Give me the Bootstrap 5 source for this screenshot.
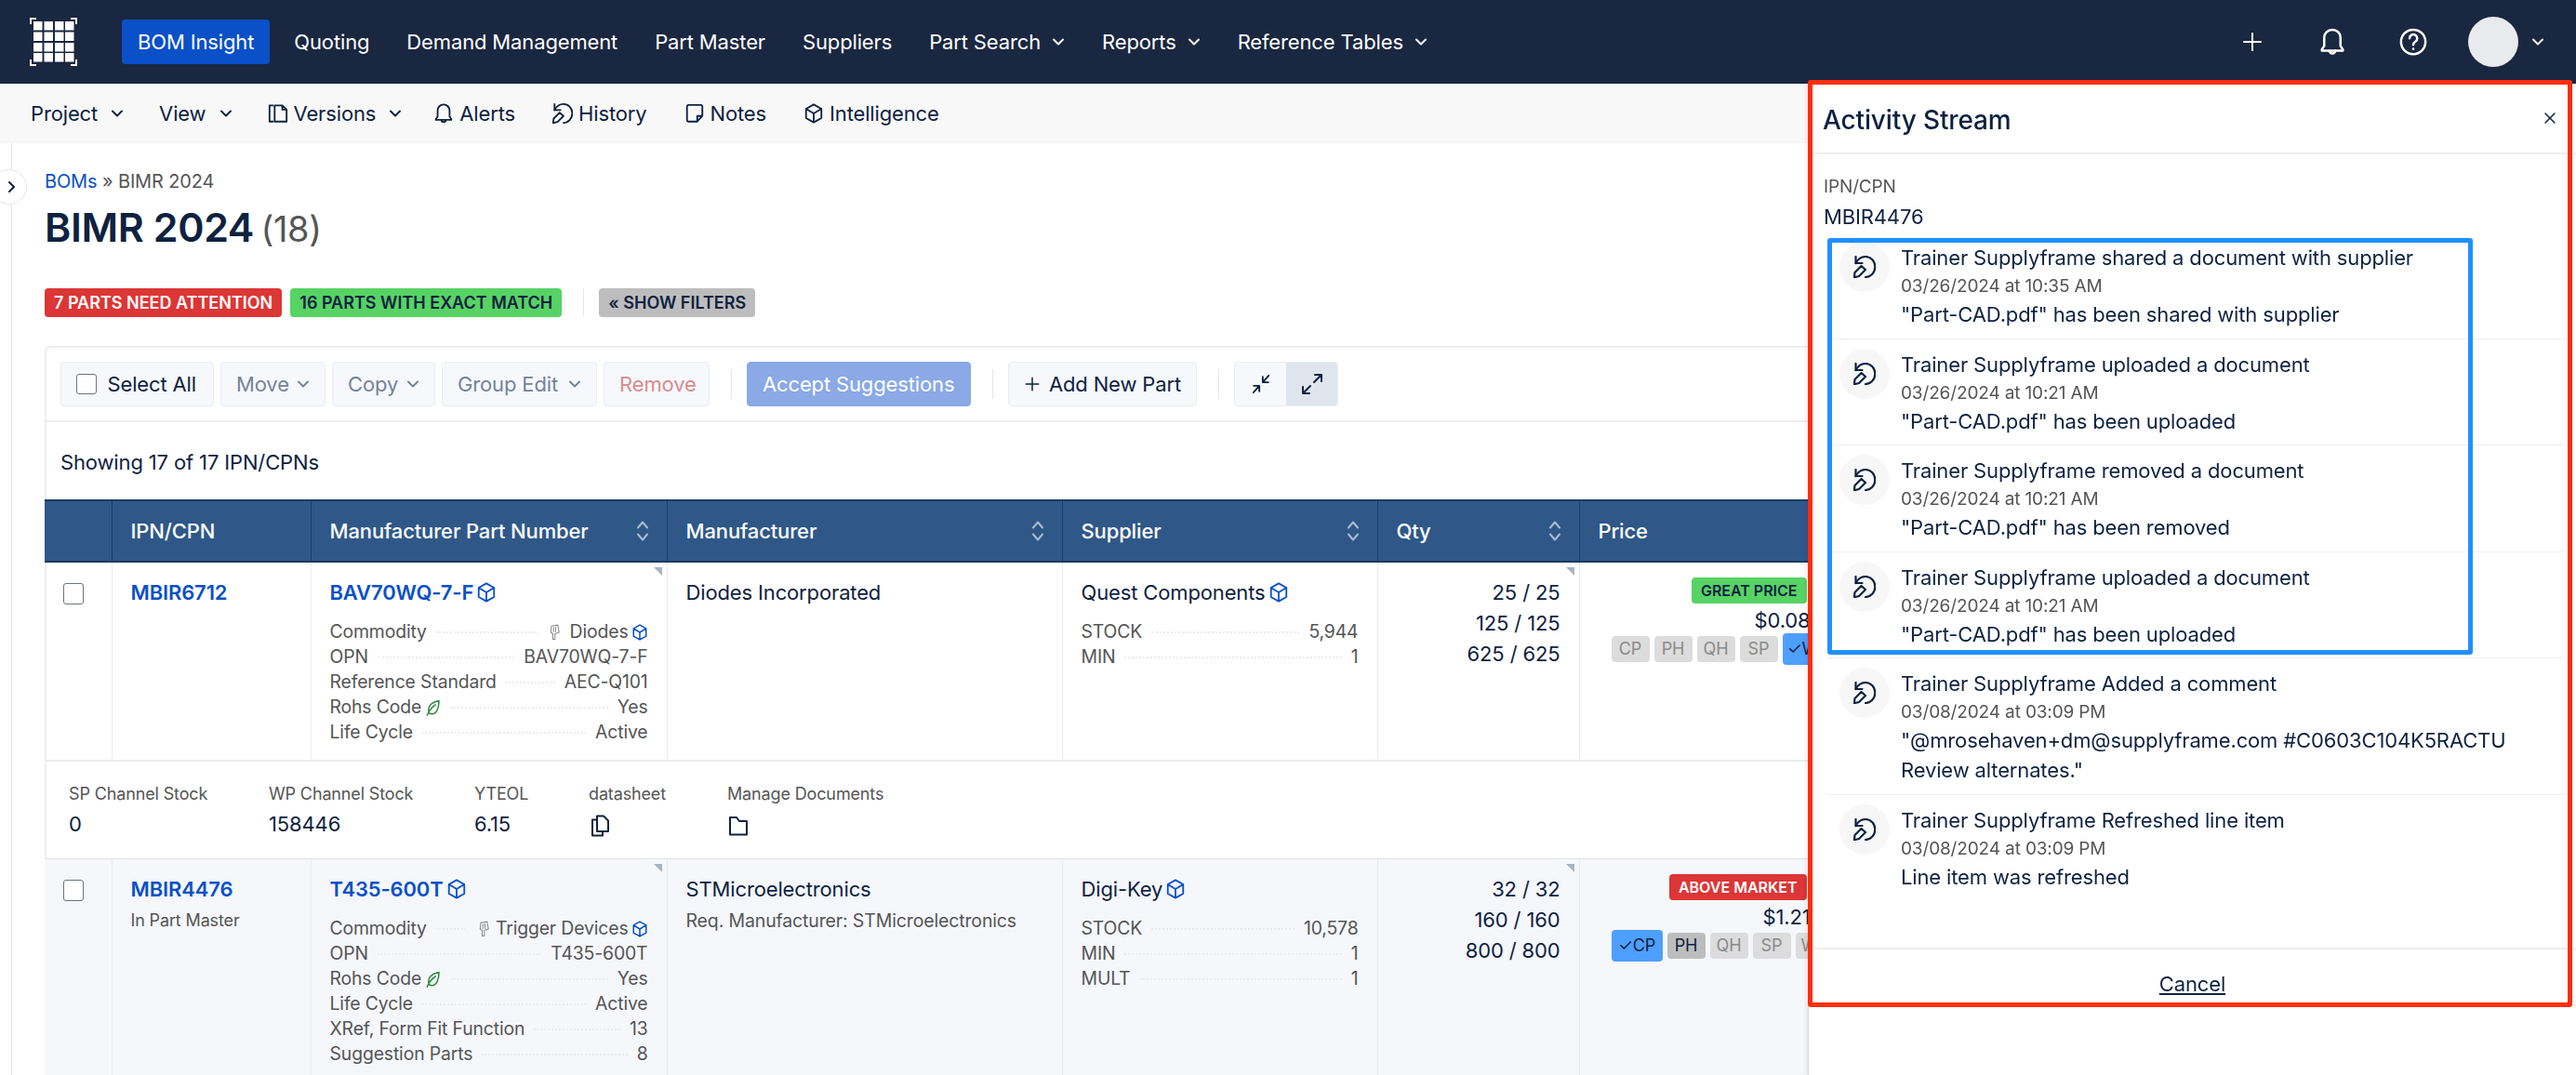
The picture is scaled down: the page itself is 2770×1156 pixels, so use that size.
<!DOCTYPE html>
<html lang="en">
<head>
    <meta charset="UTF-8">
    <meta name="viewport" content="width=device-width, initial-scale=1.0">
    <title>BIMR 2024 - BOM Insight</title>
    <link href="https://cdn.jsdelivr.net/npm/bootstrap@5.3.0/dist/css/bootstrap.min.css" rel="stylesheet">
    <style>
        html, body { height: 100%; overflow: hidden; }
        body { font-family: Inter, "Liberation Sans", sans-serif; font-size: 22px; letter-spacing: -.14px; color: #0e2240; background: #fff; }
        svg.ico { fill: none; stroke: currentColor; stroke-width: 2; stroke-linecap: round; stroke-linejoin: round; flex: none; }
        .i14 { width: 14px; height: 14px; } .i18 { width: 18px; height: 18px; } .i22 { width: 22px; height: 22px; }
        .i24 { width: 24px; height: 24px; } .i30 { width: 30px; height: 30px; }

        .topbar { height: 90px; background: #1a2740; padding: 0 32px; }
        .topbar .brand-logo { width: 51px; height: 52px; margin-right: 48px; }
        .topbar .navbar-nav .nav-link { color: #fff; font-size: 22px; line-height: 48px; padding: 0 20px; display: flex; align-items: center; }
        .topbar .navbar-nav .nav-link.active { background: #0a50c8; color: #fff; border-radius: 4px; padding: 0 17px; margin-right: 6px; }
        .topbar .nav-link .i14 { margin-left: 12px; }
        .top-actions { color: #fff; margin-right: 2px; }
        .act-plus { margin-right: 59px; } .act-bell { margin-right: 57px; } .act-help { margin-right: 44px; } .act-chev { margin-left: 14px; }
        .avatar-dot { width: 54px; height: 54px; border-radius: 50%; background: #e8eaee; }

        .subbar { height: 64px; background: #f8f8f8; padding: 0 33px; gap: 38px; }
        .subbar a { color: #0e2240; text-decoration: none; display: flex; align-items: center; gap: 6px; }
        .subbar a .i14 { margin-left: 8px; }
        .subbar a.sub-alerts { margin-left: -4px; }
        .subbar a.sub-plain { margin-left: 2px; }

        .rail { position: absolute; left: 12px; top: 154px; bottom: 0; width: 1px; background: #e6e6e6; }
        .rail-toggle { position: absolute; left: -9px; top: 182px; width: 38px; height: 38px; border-radius: 50%; border: 1px solid #e6e6e6; background: #fff; display: flex; align-items: center; justify-content: center; padding-left: 3px; }

        .page-main { padding: 28px 20px 0 48px; }
        .crumbs { font-size: 20px; line-height: 26px; color: #555; }
        .crumbs a { color: #0a50c8; text-decoration: none; }
        .page-title { font-size: 43px; font-weight: 600; line-height: 56px; margin: 8px 0 0; color: #0e2240; letter-spacing: -.4px; }
        .page-title span { font-size: 38px; font-weight: 400; color: #555; margin-left: -3px; }
        .tag-row { margin-top: 36px; height: 31px; }
        .tag-pill { font-size: 18px; font-weight: 600; line-height: 31px; padding: 0 10px; border-radius: 4px; text-transform: uppercase; letter-spacing: 0; }
        .tag-red { background: #dc3636; color: #fff; }
        .tag-green { background: #57d364; color: #0e2240; margin-left: 9px; }
        .tag-grey { background: #bdbdbd; color: #0e2240; }
        .vline { width: 1px; background: #e6e6e6; align-self: stretch; }
        .tag-row .vline { margin: 0 16px 0 23px; }

        .bom-card { margin-top: 31px; border: 2px solid #eeeeee; border-right: 0; border-bottom: 0; border-radius: 6px 0 0 0; }
        .bom-tools { height: 80px; padding: 15px 15px; gap: 7px; border-bottom: 2px solid #eeeeee; }
        .tool-btn { height: 48px; flex: none; font-size: 22px; line-height: 46px; padding: 0 16px; background: #f6f8fb; border: 1px solid #e9edf2; border-radius: 4px; color: #0e2240; display: flex; align-items: center; justify-content: space-between; white-space: nowrap; }
        .tb-select { width: 165px; padding-right: 18px; } .tb-move { width: 113px; } .tb-copy { width: 111px; } .tb-group { width: 167px; }
        .tb-remove { width: 114px; } .tb-accept { width: 241px; } .tb-add { width: 203px; }
        .tool-btn.off { color: #75839a; }
        .tool-btn.danger { color: #d98c8c; }
        .tool-btn.accept { background: #8aa9e6; border-color: #8aa9e6; color: #fff; }
        .tool-check { width: 22px; height: 22px; border: 1px solid #6c757d; border-radius: 3px; background: #fff; }
        .tool-sep { margin: 8px 9px 8px 16px; }
        .size-toggle { width: 112px; height: 48px; border: 1px solid #e9edf2; border-radius: 4px; overflow: hidden; }
        .size-toggle div { flex: 1; display: flex; align-items: center; justify-content: center; background: #f6f8fb; }
        .size-toggle div + div { background: #dfe5ed; }
        .showing { height: 83px; padding: 3px 0 0 15px; display: flex; align-items: center; }

        .bom-table { table-layout: fixed; width: calc(100% + 2px); margin: 0 0 0 -2px; color: #0e2240; }
        .bom-table > :not(caption) > * > * { padding: 16px 20px; border-bottom: 0; background: transparent; color: inherit; box-shadow: none; }
        .bom-table th { background: #2f5888 !important; color: #fff !important; font-weight: 500; height: 66px; padding: 0 20px !important; border-left: 1px solid #1c3c63; border-top: 2px solid #1c3c63; border-bottom: 2px solid #1c3c63 !important; vertical-align: middle; }
        .bom-table td { border-left: 1px solid #e9ecef; vertical-align: top; position: relative; line-height: 33px; }
        .bom-table td:first-child, .bom-table th:first-child { border-left: 0; }
        .head-sort { display: flex; justify-content: space-between; align-items: center; }
        .head-sort svg { color: #a9bcd3; margin-right: -1px; width: 14px; height: 24px; }
        .row-shade { background: #f5f7fb; }
        .row-end > td { border-bottom: 2px solid #e9ecef !important; }
        .row-check { width: 22px; height: 23px; border: 1px solid #6c757d; border-radius: 3px; background: #fff; margin-top: 6px; }
        .part-link { color: #0a50c8; font-weight: 600; text-decoration: none; }
        .part-note { font-size: 18px; line-height: 28px; color: #555; margin-top: 3px; }
        .req-note { font-size: 19.5px; }
        .link-cube { color: #0a50c8; margin-left: 3px; vertical-align: -3px; }
        .corner-tick { position: absolute; top: 5px; right: 5px; width: 0; height: 0; border-top: 9px solid #a8b4c2; border-left: 9px solid transparent; }
        .spec-list { margin-top: 12px; font-size: 19.4px; line-height: 27px; color: #555; }
        .spec-row { display: flex; align-items: center; }
        .spec-row i { flex: 1; border-bottom: 2px dotted #ececec; margin: 0 10px; }
        svg.ico.part-glyph { color: #8c8c8c; stroke-width: 1.400; }
        .leaf-mark { color: #2e8b3c; }
        .qty-cell { text-align: right; }
        .price-box { display: flex; flex-direction: column; align-items: flex-end; width: 224px; }
        .price-tag { font-size: 16px; font-weight: 600; line-height: 28px; padding: 0 10px; border-radius: 4px; letter-spacing: 0; }
        .price-val { line-height: 30px; margin: 3px -4px -1px 0; }
        .chip-row { display: flex; gap: 5px; align-items: center; align-self: flex-start; font-size: 18px; white-space: nowrap; margin-left: 14px; }
        .chip { height: 28px; line-height: 28px; width: 41px; flex: none; text-align: center; background: #dcdcdc; color: #8a8a8a; border-radius: 4px; }
        .chip.dark { background: #bdbdbd; color: #0e2240; }
        .chip.on { height: 34px; line-height: 34px; width: 55px; background: #4f9fff; color: #0e2240; }
        .detail-row { padding: 19px 0 0 26px; height: 105px; gap: 50px; }
        .detail-row > div { line-height: 32px; }
        .detail-row label { display: block; font-size: 18px; color: #555; }
        .dw-sp { width: 165px; } .dw-wp { width: 171px; } .dw-yt { width: 73px; } .dw-ds { width: 99px; }

        .stream-panel.offcanvas.offcanvas-end { --bs-offcanvas-width: 826px; top: 90px; color: #0e2240; border-left: 1px solid #ddd; box-shadow: -2px 0 4px rgba(0,0,0,.08); }
        .stream-panel .offcanvas-header { height: 76px; flex: none; padding: 3px 15px 0; border-bottom: 2px solid #eeeeee; justify-content: space-between; }
        .stream-panel .offcanvas-title { font-size: 28px; font-weight: 500; line-height: 38px; }
        svg.ico.stream-close { margin-right: 6px; margin-top: -3px; stroke-width: 1.500; }
        .stream-panel .offcanvas-body { padding: 20px 12px 0 19px; overflow: hidden; flex: none; height: 853px; }
        .ipn-label { font-size: 19px; line-height: 30px; color: #555; margin-left: -3px; }
        .ipn-value { line-height: 34px; margin-left: -3px; }
        .stream-item { display: flex; gap: 12px; padding: 12px 0 9.500px 14px; border: 0; border-bottom: 2px solid #eeeeee; background: transparent; color: inherit; line-height: 31px; }
        .stream-item:last-child { border-bottom: 0; }
        .stream-ico { width: 54px; height: 54px; margin-top: -2px; border-radius: 50%; background: #f7f7f7; display: flex; align-items: center; justify-content: center; flex: none; }
        .stream-ico svg.ico { stroke-width: 2.200; }
        .stream-time { font-size: 19px; color: #555; line-height: 30px; }
        .stream-msg { line-height: 32px; margin-top: -1px; }
        .stream-foot { height: 137px; border-top: 2px solid #eeeeee; text-align: center; padding-top: 21px; }
        .stream-foot a { color: #0e2240; }
        .mark-red { position: absolute; left: -1px; top: -4px; width: 822px; height: 997px; border: 5px solid #ff2e0d; border-radius: 3px; pointer-events: none; }
        .mark-blue { position: absolute; left: 20px; top: 166px; width: 694px; height: 448px; border: 5px solid #2090ff; border-radius: 3px; pointer-events: none; }
    </style>
</head>
<body>
    <svg width="0" height="0" class="position-absolute">
        <symbol id="chev" viewBox="0 0 14 14"><path d="M2 4.500 7 9.500 12 4.500"/></symbol>
        <symbol id="cube" viewBox="0 0 24 24"><path d="M12 1.500 21 6.500V17.500L12 22.500 3 17.500V6.500Z M3 6.500 12 12 21 6.500 M12 12V22.500"/></symbol>
        <symbol id="restore" viewBox="0 0 24 24"><path d="M2.500 1V8H9.500"/><path d="M2.500 8C5 3.500 9 1 13 1 19 1 23.300 6 23.300 12 23.300 18 18.500 23 13 23"/><path d="M.8 23.200 1.500 18 8.500 11 13 15 6 22Z"/></symbol>
        <symbol id="bell" viewBox="0 0 24 24"><path d="M12 1.500a7 7 0 0 0-7 7v7l-2 3v1h18v-1l-2-3v-7a7 7 0 0 0-7-7z"/><path d="M9.500 19.500a2.500 2.500 0 0 0 5 0"/></symbol>
        <symbol id="help" viewBox="0 0 24 24"><circle cx="12" cy="12" r="10.500"/><path d="M8.800 9a3.300 3.300 0 1 1 5 2.800c-1.200.7-1.800 1.300-1.800 2.700"/><path d="M12 18v.2"/></symbol>
        <symbol id="plus" viewBox="0 0 24 24"><path d="M12 3v18M3 12h18"/></symbol>
        <symbol id="versions" viewBox="0 0 24 24"><path d="M6 2.500H2V21.500H6"/><path d="M8 2.500H17L22 7.500V21.500H8Z M17 2.500V7.500H22"/></symbol>
        <symbol id="notes" viewBox="0 0 24 24"><path d="M3 4a2 2 0 0 1 2-2H19a2 2 0 0 1 2 2V15L15 21.500H5a2 2 0 0 1-2-2Z M21 15H15V21.500"/></symbol>
        <symbol id="docs" viewBox="0 0 24 24"><path d="M9 1.500H16L21 6.500V18H9Z"/><path d="M9 5.500H4V22.500H15V18"/></symbol>
        <symbol id="folder" viewBox="0 0 24 24"><path d="M3 3H10L13 7H21V21.500H3Z"/></symbol>
        <symbol id="leaf" viewBox="0 0 24 24"><path d="M20 2C10 4 5 9 5 16c0 3 2 5 5 5 7 0 10-9 10-19Z M3 23C6 16 10 11 15 8"/></symbol>
        <symbol id="shrink" viewBox="0 0 24 24"><path d="M14 10 21 2M14 3.500V10H20.500M10 14 3 22M10 20.500V14H3.500"/></symbol>
        <symbol id="grow" viewBox="0 0 24 24"><path d="M14 10 22 2M15 2H22V9M10 14 2 22M2 15V22H9"/></symbol>
        <symbol id="sort" viewBox="0 0 14 24"><path d="M2 8.500 7 2.500 12 8.500M2 15.500 7 21.500 12 15.500"/></symbol>
        <symbol id="chip-part" viewBox="0 0 24 24"><path d="M8 3 17 1.500 19 12 13 14V22H10V14L7 12Z M11 5V11M14 4.500V11"/></symbol>
    </svg>

    <nav class="navbar navbar-expand navbar-dark topbar">
        <div class="d-flex align-items-center w-100 h-100">
            <svg class="brand-logo" viewBox="0 0 51 52">
                <path d="M1 7V1H7M44 1H50V7M1 45V51H7M44 51H50V45" fill="none" stroke="#fff" stroke-width="2"/>
                <g fill="#fff">
                    <rect x="4" y="4" width="9.500" height="9.500"/><rect x="15.500" y="4" width="9.500" height="9.500"/><rect x="27" y="4" width="9.500" height="9.500"/><rect x="38" y="4" width="9.500" height="9.500"/>
                    <rect x="4" y="15.500" width="9.500" height="9.500"/><rect x="15.500" y="15.500" width="9.500" height="9.500"/><rect x="27" y="15.500" width="9.500" height="9.500"/><rect x="38" y="15.500" width="9.500" height="9.500"/>
                    <rect x="4" y="27" width="9.500" height="9.500"/><rect x="15.500" y="27" width="9.500" height="9.500"/><rect x="27" y="27" width="9.500" height="9.500"/><rect x="38" y="27" width="9.500" height="9.500"/>
                    <rect x="4" y="38" width="9.500" height="9.500"/><rect x="15.500" y="38" width="9.500" height="9.500"/><rect x="27" y="38" width="9.500" height="9.500"/><rect x="38" y="38" width="9.500" height="9.500"/>
                </g>
            </svg>
            <ul class="navbar-nav">
                <li class="nav-item"><a class="nav-link active" href="#">BOM Insight</a></li>
                <li class="nav-item"><a class="nav-link" href="#">Quoting</a></li>
                <li class="nav-item"><a class="nav-link" href="#">Demand Management</a></li>
                <li class="nav-item"><a class="nav-link" href="#">Part Master</a></li>
                <li class="nav-item"><a class="nav-link" href="#">Suppliers</a></li>
                <li class="nav-item"><a class="nav-link" href="#">Part Search<svg class="ico i14"><use href="#chev"/></svg></a></li>
                <li class="nav-item"><a class="nav-link" href="#">Reports<svg class="ico i14"><use href="#chev"/></svg></a></li>
                <li class="nav-item"><a class="nav-link" href="#">Reference Tables<svg class="ico i14"><use href="#chev"/></svg></a></li>
            </ul>
            <div class="ms-auto d-flex align-items-center top-actions">
                <svg class="ico i24 act-plus"><use href="#plus"/></svg>
                <svg class="ico i30 act-bell"><use href="#bell"/></svg>
                <svg class="ico i30 act-help"><use href="#help"/></svg>
                <div class="avatar-dot"></div>
                <svg class="ico i14 act-chev"><use href="#chev"/></svg>
            </div>
        </div>
    </nav>

    <div class="d-flex align-items-center subbar">
        <a href="#">Project<svg class="ico i14"><use href="#chev"/></svg></a>
        <a href="#">View<svg class="ico i14"><use href="#chev"/></svg></a>
        <a href="#"><svg class="ico i22"><use href="#versions"/></svg>Versions<svg class="ico i14"><use href="#chev"/></svg></a>
        <a href="#" class="sub-alerts"><svg class="ico i22"><use href="#bell"/></svg>Alerts</a>
        <a href="#" class="sub-plain"><svg class="ico i22"><use href="#restore"/></svg>History</a>
        <a href="#" class="sub-plain"><svg class="ico i22"><use href="#notes"/></svg>Notes</a>
        <a href="#" class="sub-plain"><svg class="ico i22"><use href="#cube"/></svg>Intelligence</a>
    </div>

    <div class="rail"></div>
    <div class="rail-toggle"><svg class="ico i14" viewBox="0 0 14 14"><path d="M5 2 10 7 5 12"/></svg></div>

    <main class="page-main">
        <div class="crumbs"><a href="#">BOMs</a> » BIMR 2024</div>
        <h1 class="page-title">BIMR 2024 <span>(18)</span></h1>
        <div class="d-flex tag-row">
            <span class="tag-pill tag-red">7 parts need attention</span>
            <span class="tag-pill tag-green">16 parts with exact match</span>
            <span class="vline"></span>
            <span class="tag-pill tag-grey">« Show filters</span>
        </div>

        <div class="bom-card">
            <div class="d-flex bom-tools">
                <div class="tool-btn tb-select"><span class="tool-check"></span>Select All</div>
                <div class="tool-btn off tb-move">Move<svg class="ico i14"><use href="#chev"/></svg></div>
                <div class="tool-btn off tb-copy">Copy<svg class="ico i14"><use href="#chev"/></svg></div>
                <div class="tool-btn off tb-group">Group Edit<svg class="ico i14"><use href="#chev"/></svg></div>
                <div class="tool-btn danger tb-remove">Remove</div>
                <span class="vline tool-sep"></span>
                <div class="tool-btn accept tb-accept">Accept Suggestions</div>
                <span class="vline tool-sep"></span>
                <div class="tool-btn tb-add"><svg class="ico i18"><use href="#plus"/></svg>Add New Part</div>
                <span class="vline tool-sep"></span>
                <div class="d-flex size-toggle">
                    <div><svg class="ico i22"><use href="#shrink"/></svg></div>
                    <div><svg class="ico i24"><use href="#grow"/></svg></div>
                </div>
            </div>
            <div class="showing">Showing 17 of 17 IPN/CPNs</div>

            <table class="table bom-table">
                <colgroup>
                    <col style="width:72px"><col style="width:214px"><col style="width:383px"><col style="width:425px"><col style="width:339px"><col style="width:217px"><col style="width:280px"><col>
                </colgroup>
                <thead>
                    <tr>
                        <th></th>
                        <th>IPN/CPN</th>
                        <th><div class="head-sort">Manufacturer Part Number<svg class="ico"><use href="#sort"/></svg></div></th>
                        <th><div class="head-sort">Manufacturer<svg class="ico"><use href="#sort"/></svg></div></th>
                        <th><div class="head-sort">Supplier<svg class="ico"><use href="#sort"/></svg></div></th>
                        <th><div class="head-sort">Qty<svg class="ico"><use href="#sort"/></svg></div></th>
                        <th>Price</th>
                        <th></th>
                    </tr>
                </thead>
                <tbody>
                    <tr class="row-end">
                        <td><div class="row-check"></div></td>
                        <td><a class="part-link" href="#">MBIR6712</a></td>
                        <td>
                            <span class="corner-tick"></span>
                            <a class="part-link" href="#">BAV70WQ-7-F<svg class="ico i22 link-cube"><use href="#cube"/></svg></a>
                            <div class="spec-list">
                                <div class="spec-row">Commodity<i></i><svg class="ico i18 me-2 part-glyph"><use href="#chip-part"/></svg>Diodes<svg class="ico i18 link-cube"><use href="#cube"/></svg></div>
                                <div class="spec-row">OPN<i></i>BAV70WQ-7-F</div>
                                <div class="spec-row">Reference Standard<i></i>AEC-Q101</div>
                                <div class="spec-row">Rohs Code<svg class="ico i18 ms-1 leaf-mark"><use href="#leaf"/></svg><i></i>Yes</div>
                                <div class="spec-row">Life Cycle<i></i>Active</div>
                            </div>
                        </td>
                        <td>Diodes Incorporated</td>
                        <td>
                            Quest Components<svg class="ico i22 link-cube"><use href="#cube"/></svg>
                            <div class="spec-list">
                                <div class="spec-row">STOCK<i></i>5,944</div>
                                <div class="spec-row">MIN<i></i>1</div>
                            </div>
                        </td>
                        <td class="qty-cell"><span class="corner-tick"></span>25 / 25<br>125 / 125<br>625 / 625</td>
                        <td>
                            <div class="price-box">
                                <span class="price-tag tag-green">GREAT PRICE</span>
                                <div class="price-val">$0.08</div>
                                <div class="chip-row"><span class="chip">CP</span><span class="chip">PH</span><span class="chip">QH</span><span class="chip">SP</span><span class="chip on">✓WP</span></div>
                            </div>
                        </td>
                        <td></td>
                    </tr>
                    <tr>
                        <td colspan="8" class="p-0 border-start-0">
                            <div class="d-flex detail-row border-bottom">
                                <div class="dw-sp"><label>SP Channel Stock</label>0</div>
                                <div class="dw-wp"><label>WP Channel Stock</label>158446</div>
                                <div class="dw-yt"><label>YTEOL</label>6.15</div>
                                <div class="dw-ds"><label>datasheet</label><svg class="ico i24"><use href="#docs"/></svg></div>
                                <div><label>Manage Documents</label><svg class="ico i24"><use href="#folder"/></svg></div>
                            </div>
                        </td>
                    </tr>
                    <tr class="row-shade">
                        <td><div class="row-check"></div></td>
                        <td><a class="part-link" href="#">MBIR4476</a><div class="part-note">In Part Master</div></td>
                        <td>
                            <span class="corner-tick"></span>
                            <a class="part-link" href="#">T435-600T<svg class="ico i22 link-cube"><use href="#cube"/></svg></a>
                            <div class="spec-list">
                                <div class="spec-row">Commodity<i></i><svg class="ico i18 me-1 part-glyph"><use href="#chip-part"/></svg>Trigger Devices<svg class="ico i18 link-cube"><use href="#cube"/></svg></div>
                                <div class="spec-row">OPN<i></i>T435-600T</div>
                                <div class="spec-row">Rohs Code<svg class="ico i18 ms-1 leaf-mark"><use href="#leaf"/></svg><i></i>Yes</div>
                                <div class="spec-row">Life Cycle<i></i>Active</div>
                                <div class="spec-row">XRef, Form Fit Function<i></i>13</div>
                                <div class="spec-row">Suggestion Parts<i></i>8</div>
                            </div>
                        </td>
                        <td>STMicroelectronics<div class="part-note req-note">Req. Manufacturer: STMicroelectronics</div></td>
                        <td>
                            Digi-Key<svg class="ico i22 link-cube"><use href="#cube"/></svg>
                            <div class="spec-list">
                                <div class="spec-row">STOCK<i></i>10,578</div>
                                <div class="spec-row">MIN<i></i>1</div>
                                <div class="spec-row">MULT<i></i>1</div>
                            </div>
                        </td>
                        <td class="qty-cell"><span class="corner-tick"></span>32 / 32<br>160 / 160<br>800 / 800</td>
                        <td>
                            <div class="price-box">
                                <span class="price-tag tag-red">ABOVE MARKET</span>
                                <div class="price-val">$1.21</div>
                                <div class="chip-row"><span class="chip on">✓CP</span><span class="chip dark">PH</span><span class="chip">QH</span><span class="chip">SP</span><span class="chip">WP</span></div>
                            </div>
                        </td>
                        <td></td>
                    </tr>
                </tbody>
            </table>
        </div>
    </main>

    <!-- activity panel, always open in this view -->
    <div class="offcanvas offcanvas-end show stream-panel" tabindex="-1" data-bs-backdrop="false" data-bs-scroll="true">
        <div class="offcanvas-header">
            <h5 class="offcanvas-title">Activity Stream</h5>
            <svg class="ico i14 stream-close" viewBox="0 0 14 14"><path d="M2 2 12 12M12 2 2 12"/></svg>
        </div>
        <div class="offcanvas-body">
            <div class="ipn-label">IPN/CPN</div>
            <div class="ipn-value">MBIR4476</div>
            <ul class="list-group list-group-flush">
                <li class="list-group-item stream-item">
                    <div class="stream-ico"><svg class="ico i24"><use href="#restore"/></svg></div>
                    <div>Trainer Supplyframe shared a document with supplier<div class="stream-time">03/26/2024 at 10:35 AM</div><div class="stream-msg">"Part-CAD.pdf" has been shared with supplier</div></div>
                </li>
                <li class="list-group-item stream-item">
                    <div class="stream-ico"><svg class="ico i24"><use href="#restore"/></svg></div>
                    <div>Trainer Supplyframe uploaded a document<div class="stream-time">03/26/2024 at 10:21 AM</div><div class="stream-msg">"Part-CAD.pdf" has been uploaded</div></div>
                </li>
                <li class="list-group-item stream-item">
                    <div class="stream-ico"><svg class="ico i24"><use href="#restore"/></svg></div>
                    <div>Trainer Supplyframe removed a document<div class="stream-time">03/26/2024 at 10:21 AM</div><div class="stream-msg">"Part-CAD.pdf" has been removed</div></div>
                </li>
                <li class="list-group-item stream-item">
                    <div class="stream-ico"><svg class="ico i24"><use href="#restore"/></svg></div>
                    <div>Trainer Supplyframe uploaded a document<div class="stream-time">03/26/2024 at 10:21 AM</div><div class="stream-msg">"Part-CAD.pdf" has been uploaded</div></div>
                </li>
                <li class="list-group-item stream-item">
                    <div class="stream-ico"><svg class="ico i24"><use href="#restore"/></svg></div>
                    <div>Trainer Supplyframe Added a comment<div class="stream-time">03/08/2024 at 03:09 PM</div><div class="stream-msg">"@mrosehaven+dm@supplyframe.com #C0603C104K5RACTU<br>Review alternates."</div></div>
                </li>
                <li class="list-group-item stream-item">
                    <div class="stream-ico"><svg class="ico i24"><use href="#restore"/></svg></div>
                    <div>Trainer Supplyframe Refreshed line item<div class="stream-time">03/08/2024 at 03:09 PM</div><div class="stream-msg">Line item was refreshed</div></div>
                </li>
            </ul>
        </div>
        <div class="stream-foot"><a href="#">Cancel</a></div>
        <div class="mark-red"></div>
        <div class="mark-blue"></div>
    </div>

    <script src="https://cdn.jsdelivr.net/npm/bootstrap@5.3.0/dist/js/bootstrap.bundle.min.js"></script>
</body>
</html>
